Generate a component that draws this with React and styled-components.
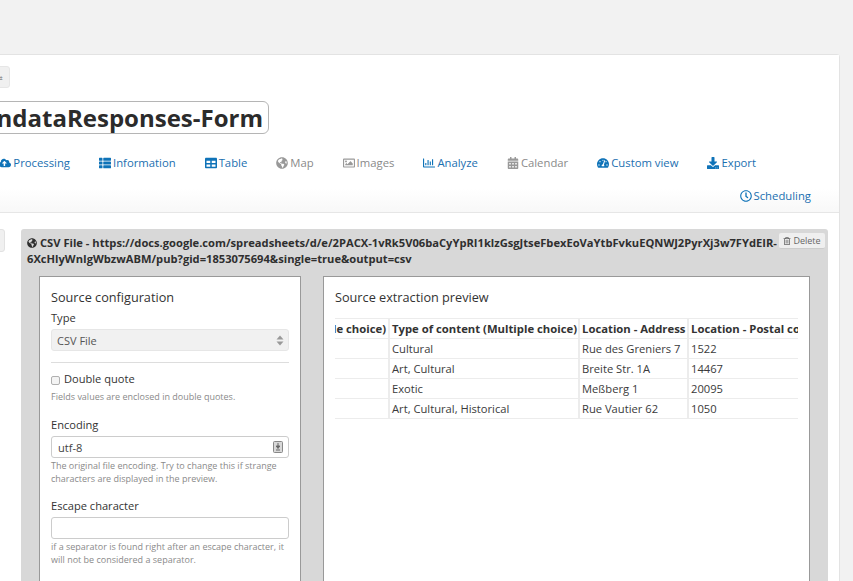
import React from 'react';
import styled, { createGlobalStyle } from 'styled-components';
import {
  FaCloudUploadAlt,
  FaThList,
  FaTable,
  FaGlobeAmericas,
  FaRegImage,
  FaRegChartBar,
  FaCalendarAlt,
  FaTachometerAlt,
  FaDownload,
  FaRegClock,
  FaRegTrashAlt,
} from 'react-icons/fa';

const GlobalStyle = createGlobalStyle`
  html, body {
    margin: 0;
    padding: 0;
    height: 100%;
    overflow: hidden;
    background: #f2f2f2;
  }
  * { box-sizing: border-box; }
`;

const Page = styled.div`
  width: 853px;
  height: 581px;
  overflow: hidden;
  padding-top: 54px;
  font-family: 'Open Sans', sans-serif;
  color: #333;
  font-size: 11.1px;
`;

const Card = styled.div`
  width: 901px;
  height: 600px;
  margin-left: -61px;
  background: #fff;
  border: 1px solid #e3e3e3;
  border-radius: 3px;
`;

const Header = styled.div`
  height: 158px;
  border-bottom: 1px solid #e6e6e6;
  padding: 11px 28px 0 0;
  background: linear-gradient(to bottom, #fff 85%, #f8f8f8 100%);
`;

const SmallButton = styled.div`
  width: 70px;
  height: 22px;
  background: #f0f0f0;
  border: 1px solid #e6e6e6;
  border-radius: 3px;
  display: flex;
  justify-content: flex-end;
  align-items: center;
  padding-right: 6px;
  color: #999;
  font-size: 8px;
`;

const TitleBox = styled.div`
  width: 329px;
  height: 33px;
  margin-top: 13px;
  border: 1px solid #b5b5b5;
  border-radius: 6px;
  display: flex;
  justify-content: flex-end;
  align-items: center;
  padding-right: 5px;
  font-size: 24px;
  font-weight: 700;
  color: #2b2b2b;
  white-space: nowrap;
  overflow: hidden;
`;

const TabRow = styled.div`
  display: flex;
  justify-content: flex-end;
  gap: 29px;
  height: 17px;
  margin-top: ${(p) => p.$top}px;
  margin-right: ${(p) => p.$right}px;
`;

const Tab = styled.a`
  display: flex;
  align-items: center;
  gap: 2px;
  font-size: 11.3px;
  line-height: 17px;
  white-space: nowrap;
  color: ${(p) => (p.$off ? '#8a8a8a' : '#1a6fb0')};
  svg {
    width: 12px;
    height: 12px;
    color: ${(p) => (p.$off ? '#999' : '#0f73b8')};
  }
`;

const Body = styled.div`
  display: flex;
  gap: 16px;
  padding-top: 16px;
`;

const Stub = styled.div`
  width: 65px;
  height: 23px;
  background: #f0f0f0;
  border: 1px solid #e2e2e2;
  border-radius: 3px;
`;

const SourcePanel = styled.div`
  position: relative;
  width: 807px;
  background: #d8d8d8;
  border-radius: 3px;
  height: 420px;
  padding: 6px 0 0 6px;
`;

const SourceTitle = styled.div`
  font-size: 11.17px;
  font-weight: 700;
  line-height: 15.5px;
  color: #2f2f2f;
  padding-right: 47px;
  svg {
    font-size: 10px;
    margin-right: 3px;
    vertical-align: -1px;
  }
`;

const DeleteButton = styled.button`
  position: absolute;
  top: 4px;
  right: 3px;
  height: 16px;
  width: 46px;
  padding: 0;
  border: 0;
  border-bottom: 1px solid #ccc;
  border-radius: 2px;
  background: #efefef;
  color: #666;
  font-family: inherit;
  font-size: 9px;
  display: flex;
  align-items: center;
  justify-content: center;
  gap: 2px;
  svg {
    font-size: 8px;
  }
`;

const Columns = styled.div`
  display: flex;
  gap: 22px;
  margin-top: 10px;
  margin-left: 12px;
`;

const Box = styled.div`
  width: ${(p) => p.$width}px;
  height: 320px;
  background: #fff;
  border: 1px solid #999;
  padding: 11px ${(p) => p.$side}px 0;
`;

const BoxTitle = styled.div`
  font-size: 12.7px;
  line-height: 18px;
  color: #333;
`;

const Label = styled.div`
  font-size: 11.1px;
  line-height: 16px;
  margin-top: ${(p) => p.$top || 0}px;
`;

const SelectBox = styled.div`
  height: 22px;
  margin-top: 3px;
  background: #f1f1f1;
  border-radius: 3px;
  border: 1px solid #e6e6e6;
  display: flex;
  justify-content: space-between;
  align-items: center;
  padding: 0 4px 0 5px;
  color: #555;
  font-size: 11px;
`;

const Rule = styled.div`
  height: 1px;
  background: #ddd;
  margin-top: 11px;
`;

const CheckRow = styled.div`
  display: flex;
  align-items: center;
  gap: 4px;
  margin-top: 8px;
  font-size: 11.1px;
  line-height: 16px;
`;

const CheckMark = styled.span`
  width: 9px;
  height: 9px;
  border: 1px solid #b0b0b0;
  border-radius: 2px;
  background: #f4f4f4;
  margin-top: 2px;
`;

const Help = styled.div`
  font-size: 9px;
  line-height: 13px;
  color: #8a8a8a;
  margin-top: ${(p) => p.$top || 0}px;
`;

const TextInput = styled.div`
  height: 22px;
  margin-top: 3px;
  border: 1px solid #ccc;
  border-radius: 3px;
  display: flex;
  justify-content: space-between;
  align-items: center;
  padding: 0 5px 0 6px;
  font-size: 11.1px;
  color: #444;
`;

const TableClip = styled.div`
  overflow: hidden;
  margin-top: 12px;
`;

const Sheet = styled.table`
  border-collapse: collapse;
  table-layout: fixed;
  width: 800px;
  margin-left: -137px;
  font-size: 11.2px;
  line-height: 16px;
  white-space: nowrap;
  th, td {
    height: 20px;
    padding: 1px 2px;
    border: 1px solid #ececec;
    border-left: 2px solid #ececec;
    text-align: left;
    overflow: hidden;
    color: #3a3a3a;
  }
  th {
    color: #333;
    font-weight: 700;
    font-size: 11.3px;
  }
  th:first-child {
    text-align: right;
    padding-right: 2px;
  }
`;

const tabsTop = [
  { Icon: FaCloudUploadAlt, label: 'Processing' },
  { Icon: FaThList, label: 'Information' },
  { Icon: FaTable, label: 'Table' },
  { Icon: FaGlobeAmericas, label: 'Map', off: true },
  { Icon: FaRegImage, label: 'Images', off: true },
  { Icon: FaRegChartBar, label: 'Analyze' },
  { Icon: FaCalendarAlt, label: 'Calendar', off: true },
  { Icon: FaTachometerAlt, label: 'Custom view' },
  { Icon: FaDownload, label: 'Export' },
];

const rows = [
  ['Cultural', 'Rue des Greniers 7', '1522'],
  ['Art, Cultural', 'Breite Str. 1A', '14467'],
  ['Exotic', 'Meßberg 1', '20095'],
  ['Art, Cultural, Historical', 'Rue Vautier 62', '1050'],
];

const SortArrows = () => (
  <svg width="8" height="11" viewBox="0 0 8 11" fill="#999">
    <path d="M4 0.5 L7.5 4.5 H0.5 Z M4 10.5 L0.5 6.5 H7.5 Z" />
  </svg>
);

const KeyBadge = () => (
  <svg width="10" height="12" viewBox="0 0 10 12">
    <rect x="0.5" y="0.5" width="9" height="11" rx="1" fill="#d8d8d8" stroke="#888" />
    <path d="M5 2 V6 M3.2 5 H6.8 L5 7.5 Z M3 9 H7" stroke="#666" fill="#666" />
  </svg>
);

const App = () => (
  <Page>
    <GlobalStyle />
    <Card>
      <Header>
        <SmallButton>⇄</SmallButton>
        <TitleBox>ndataResponses-Form</TitleBox>
        <TabRow $top={20} $right={55}>
          {tabsTop.map(({ Icon, label, off }) => (
            <Tab key={label} $off={off}>
              <Icon />
              {label}
            </Tab>
          ))}
        </TabRow>
        <TabRow $top={16} $right={0}>
          <Tab>
            <FaRegClock />
            Scheduling
          </Tab>
        </TabRow>
      </Header>
      <Body>
        <Stub />
        <SourcePanel>
          <SourceTitle>
            <FaGlobeAmericas />
            CSV File - https://docs.google.com/spreadsheets/d/e/2PACX-1vRk5V06baCyYpRI1klzGsgJtseFbexEoVaYtbFvkuEQNWJ2PyrXj3w7FYdEIR-6XcHlyWnIgWbzwABM/pub?gid=1853075694&single=true&output=csv
          </SourceTitle>
          <DeleteButton>
            <FaRegTrashAlt />
            Delete
          </DeleteButton>
          <Columns>
            <Box $width={262} $side={11}>
              <BoxTitle>Source configuration</BoxTitle>
              <Label $top={4}>Type</Label>
              <SelectBox>
                CSV File
                <SortArrows />
              </SelectBox>
              <Rule />
              <CheckRow>
                <CheckMark />
                Double quote
              </CheckRow>
              <Help $top={3}>Fields values are enclosed in double quotes.</Help>
              <Label $top={14}>Encoding</Label>
              <TextInput>
                utf-8
                <KeyBadge />
              </TextInput>
              <Help $top={1}>
                The original file encoding. Try to change this if strange characters are displayed in the preview.
              </Help>
              <Label $top={13}>Escape character</Label>
              <TextInput />
              <Help $top={1}>
                if a separator is found right after an escape character, it will not be considered a separator.
              </Help>
            </Box>
            <Box $width={487} $side={11}>
              <BoxTitle>Source extraction preview</BoxTitle>
              <TableClip>
                <Sheet>
                  <colgroup>
                    <col width="190" />
                    <col width="190" />
                    <col width="109" />
                    <col width="311" />
                  </colgroup>
                  <thead>
                    <tr>
                      <th>Type of place (Single choice)</th>
                      <th>Type of content (Multiple choice)</th>
                      <th>Location - Address</th>
                      <th>Location - Postal code</th>
                    </tr>
                  </thead>
                  <tbody>
                    {rows.map((r) => (
                      <tr key={r[1]}>
                        <td />
                        {r.map((c) => (
                          <td key={c}>{c}</td>
                        ))}
                      </tr>
                    ))}
                  </tbody>
                </Sheet>
              </TableClip>
            </Box>
          </Columns>
        </SourcePanel>
      </Body>
    </Card>
  </Page>
);

export default App;
